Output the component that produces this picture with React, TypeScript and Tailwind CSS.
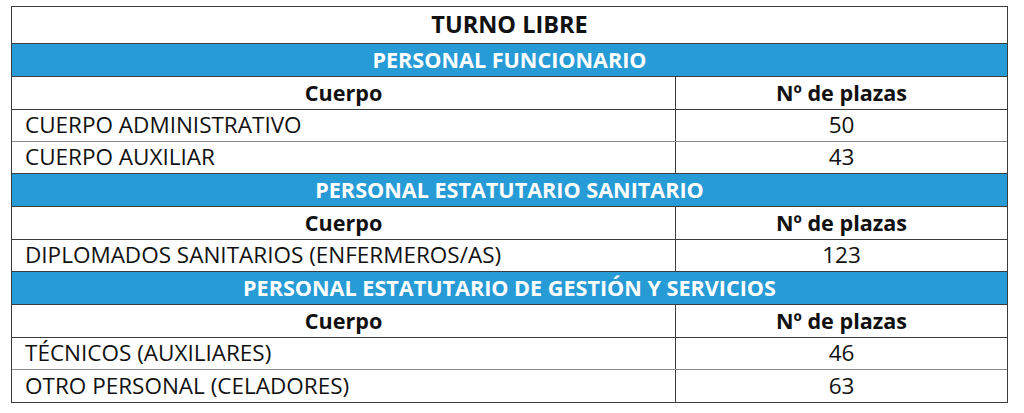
import React from 'react'

type Row =
  | { kind: 'section'; text: string }
  | { kind: 'head' }
  | { kind: 'data'; name: string; plazas: number; last?: boolean }

const rows: Row[] = [
  { kind: 'section', text: 'PERSONAL FUNCIONARIO' },
  { kind: 'head' },
  { kind: 'data', name: 'CUERPO ADMINISTRATIVO', plazas: 50 },
  { kind: 'data', name: 'CUERPO AUXILIAR', plazas: 43, last: true },
  { kind: 'section', text: 'PERSONAL ESTATUTARIO SANITARIO' },
  { kind: 'head' },
  { kind: 'data', name: 'DIPLOMADOS SANITARIOS (ENFERMEROS/AS)', plazas: 123, last: true },
  { kind: 'section', text: 'PERSONAL ESTATUTARIO DE GESTIÓN Y SERVICIOS' },
  { kind: 'head' },
  { kind: 'data', name: 'TÉCNICOS (AUXILIARES)', plazas: 46 },
  { kind: 'data', name: 'OTRO PERSONAL (CELADORES)', plazas: 63, last: true },
]

export default function App() {
  return (
    <div className="w-[1024px] h-[413px] bg-white pt-[6px] pl-[11px] font-['Open_Sans',sans-serif] text-[#111] leading-none">
      <div className="w-[997px] border border-[#3c3c3c]">
        {/* Title */}
        <div className="h-[37px] flex items-center justify-center border-b border-[#3c3c3c] text-[23.5px] font-bold">
          TURNO LIBRE
        </div>

        {rows.map((row, i) => {
          const isLast = i === rows.length - 1
          if (row.kind === 'section') {
            return (
              <div
                key={i}
                className="h-[33px] flex items-center justify-center bg-[#279bd6] border-b border-[#3c3c3c] text-white text-[21.6px] font-bold"
              >
                {row.text}
              </div>
            )
          }
          if (row.kind === 'head') {
            return (
              <div key={i} className="h-[33px] flex border-b border-[#3c3c3c] text-[21.6px] font-bold">
                <div className="w-[664px] flex items-center justify-center border-r border-[#3c3c3c]">Cuerpo</div>
                <div className="flex-1 flex items-center justify-center">Nº de plazas</div>
              </div>
            )
          }
          return (
            <div
              key={i}
              className={`h-[32px] flex text-[22.5px] ${
                isLast ? '' : row.last ? 'border-b border-[#3c3c3c]' : 'border-b border-[#8a8a8a]'
              }`}
            >
              <div className="w-[664px] flex items-center pl-[13px] border-r border-[#3c3c3c]">{row.name}</div>
              <div className="flex-1 flex items-center justify-center">{row.plazas}</div>
            </div>
          )
        })}
      </div>
    </div>
  )
}
